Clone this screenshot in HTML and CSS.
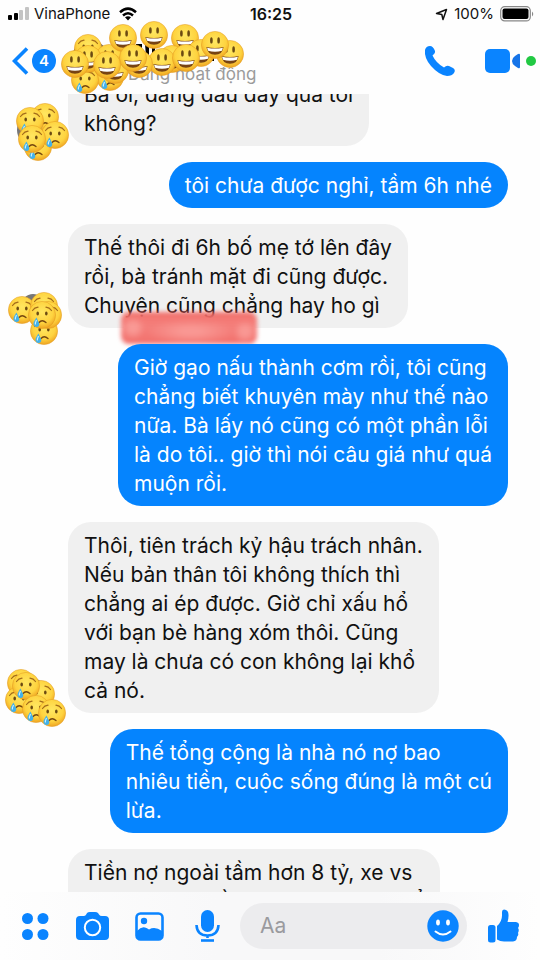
FILE: index.html
```html
<!DOCTYPE html>
<html lang="vi">
<head>
<meta charset="utf-8">
<meta name="viewport" content="width=device-width, initial-scale=1">
<title>Messenger</title>
<link rel="stylesheet" href="styles.css">
</head>
<body>
<svg class="defs" width="0" height="0" aria-hidden="true">
  <defs>
    <radialGradient id="skin" gradientUnits="userSpaceOnUse" cx="0" cy="-3" r="17">
      <stop offset="0" stop-color="#ffe761"/><stop offset=".65" stop-color="#fed33f"/><stop offset="1" stop-color="#eda01f"/>
    </radialGradient>
    <symbol id="happy" viewBox="-14 -14 28 28" overflow="visible">
      <circle r="13.6" fill="url(#skin)" stroke="#e39a20" stroke-width=".5"/>
      <ellipse cx="-3.6" cy="-4.6" rx="1.3" ry="3.2" fill="#6b4a12"/>
      <ellipse cx="3.6" cy="-4.6" rx="1.3" ry="3.2" fill="#6b4a12"/>
      <path d="M-8.600 2Q0 4 8.600 2Q7.500 9.800 0 9.800T-8.600 2Z" fill="#774313"/>
      <path d="M-7.900 2.700Q0 4.500 7.900 2.700L7 5.800Q0 7.500-7 5.800Z" fill="#fff"/>
    </symbol>
    <symbol id="sad" viewBox="-14 -14 28 28" overflow="visible">
      <circle r="13.6" fill="url(#skin)" stroke="#e39a20" stroke-width=".5"/>
      <path d="M-9.500-4.500Q-7.500-7.500-4-7.800M9.500-4.500Q7.500-7.500 4-7.800" fill="none" stroke="#a36b1b" stroke-width="1.200" stroke-linecap="round"/>
      <ellipse cx="-4.300" cy="-1.500" rx="1.300" ry="2" fill="#6b4a12"/>
      <ellipse cx="4.300" cy="-1.500" rx="1.300" ry="2" fill="#6b4a12"/>
      <path d="M-3 7.500Q0 4 4 7.500" fill="none" stroke="#74450f" stroke-width="1.300" stroke-linecap="round"/>
      <path d="M-5.500 2.500Q-9 7.500-8.500 9.500Q-7.500 12.500-5 12Q-2 11-3 8Z" fill="#42b1ea"/>
      <path d="M-5.500 5Q-7 8-6.500 9.500" fill="none" stroke="#c9efff" stroke-width="1.200"/>
    </symbol>
  </defs>
</svg>
<div class="app">
  <div class="status">
    <div class="status-left">
      <svg width="22" height="14" viewBox="0 0 22 14" aria-hidden="true"><rect y="8" width="4" height="5" rx="1"/><rect x="6" y="6" width="4" height="7" rx="1"/><rect x="11" y="3" width="4" height="10" rx="1" fill="#c4c4c4"/><rect x="17" width="4" height="13" rx="1" fill="#c4c4c4"/></svg>
      <span>VinaPhone</span>
      <svg class="wifi" width="20" height="14" viewBox="0 0 20 14" aria-hidden="true"><path d="M2 5.200Q10-2 18 5.200M5 8.500Q10 4 15 8.500" fill="none" stroke="#000" stroke-width="2.500"/><path d="M7 10.300Q10 8 13 10.300L10 13.500Z"/></svg>
    </div>
    <strong>16:25</strong>
    <div class="status-right">
      <svg width="13" height="13" viewBox="0 0 13 13" aria-hidden="true"><path d="M1.500 5.500L11.500 1.500L8 11.500L6.800 6.500Z" fill="none" stroke="#111" stroke-width="1.500" stroke-linejoin="round"/></svg>
      <span>100%</span>
      <svg width="34" height="16" viewBox="0 0 34 16" aria-hidden="true"><rect x=".7" y=".7" width="29.600" height="14.200" rx="4" fill="#fff" stroke="#888" stroke-width="1.200"/><rect x="2.500" y="2.500" width="26" height="10.600" rx="2"/><path d="M32 5.500Q34.500 8 32 10.500Z" fill="#888"/></svg>
    </div>
  </div>
  <header class="header">
    <button class="back" aria-label="Back">
      <svg width="17" height="28" viewBox="0 0 17 28" aria-hidden="true"><path d="M15 1.500L2.500 14L15 26.500" fill="none" stroke="#0a84ff" stroke-width="3.600"/></svg>
      <span class="count">4</span>
    </button>
    <div class="contact">
      <span class="presence">Đang hoạt động</span>
      <svg class="cover" width="196" height="76" viewBox="56 20 196 76" aria-hidden="true">
        <circle cx="90" cy="58" r="18" fill="#69645f"/>
        <path d="M136 44H142V53H139V47H136ZM145 44H155V56H152V47H149V56H146ZM205 58H214V61H205Z"/>
        <use href="#sad" x="74" y="34" width="28" height="28"/>
        <use href="#happy" x="95" y="44" width="28" height="28"/>
        <use href="#sad" x="96" y="63" width="28" height="28"/>
        <use href="#sad" x="71" y="66" width="28" height="28"/>
        <use href="#happy" x="74" y="45" width="28" height="28"/>
        <use href="#happy" x="101" y="56" width="28" height="28"/>
        <use href="#happy" x="109" y="24" width="28" height="28"/>
        <use href="#happy" x="140" y="21" width="28" height="28"/>
        <use href="#happy" x="171" y="24" width="28" height="28"/>
        <use href="#happy" x="187" y="39" width="28" height="28"/>
        <use href="#happy" x="216" y="40" width="28" height="28"/>
        <use href="#happy" x="201" y="31" width="28" height="28"/>
        <use href="#happy" x="158" y="45" width="28" height="28"/>
        <use href="#happy" x="148" y="48" width="28" height="28"/>
        <use href="#happy" x="172" y="44" width="28" height="28"/>
        <use href="#happy" x="125" y="50" width="28" height="28"/>
        <use href="#happy" x="119" y="44" width="28" height="28"/>
        <use href="#happy" x="61" y="50" width="28" height="28"/>
        <use href="#happy" x="93" y="51" width="28" height="28"/>
      </svg>
    </div>
    <button aria-label="Call">
      <svg width="32" height="32" viewBox="0 0 32 32" aria-hidden="true"><path d="M1 5Q2 1 6 1Q9 1 11 6Q11.500 8 8.500 10.500Q12 18 20 22.500Q22.500 20 25 21L29 23Q32 25 30 28Q28 31 23 31Q15 30 7 21Q0 13 1 5Z" fill="#0a84ff"/></svg>
    </button>
    <button class="video" aria-label="Video call">
      <svg width="51" height="26" viewBox="0 0 51 26" aria-hidden="true"><rect y="1" width="25" height="24" rx="5" fill="#0a84ff"/><path d="M27 13Q27 10 30 8L33 6Q35 5 35 7V19Q35 21 33 20L30 18Q27 16 27 13Z" fill="#1674e8"/><circle cx="46" cy="13" r="5" fill="#22c943"/></svg>
    </button>
  </header>
  <main class="thread">
    <div class="messages">
      <div class="row">
        <svg class="avatar" width="64" height="64" aria-hidden="true">
          <circle cx="29" cy="32" r="16" fill="#777"/>
          <use href="#sad" x="27" y="5" width="28" height="28"/><use href="#sad" x="12" y="9" width="28" height="28"/><use href="#sad" x="20" y="35" width="28" height="28"/><use href="#sad" x="37" y="23" width="28" height="28"/><use href="#sad" x="14" y="27" width="28" height="28"/>
        </svg>
        <p class="bubble">Bà ơi, đang đâu đấy qua tôi<br>không?</p>
      </div>
      <div class="row mine"><p class="bubble">tôi chưa được nghỉ, tầm 6h nhé</p></div>
      <div class="row">
        <svg class="avatar" width="64" height="64" aria-hidden="true">
          <circle cx="29" cy="26" r="12" fill="#777"/>
          <use href="#sad" x="4" y="16" width="28" height="28"/><use href="#sad" x="26" y="12" width="28" height="28"/><use href="#sad" x="26" y="37" width="28" height="28"/><use href="#sad" x="30" y="21" width="28" height="28"/><use href="#sad" x="24" y="21" width="28" height="28"/>
        </svg>
        <p class="bubble">Thế thôi đi 6h bố mẹ tớ lên đây<br>rồi, bà tránh mặt đi cũng được.<br>Chuyện cũng chẳng hay ho gì<span class="smear"></span></p>
      </div>
      <div class="row mine"><p class="bubble">Giờ gạo nấu thành cơm rồi, tôi cũng<br>chẳng biết khuyên mày như thế nào<br>nữa. Bà lấy nó cũng có một phần lỗi<br>là do tôi.. giờ thì nói câu giá như quá<br>muộn rồi.</p></div>
      <div class="row">
        <svg class="avatar" width="64" height="64" aria-hidden="true">
          <circle cx="28" cy="26" r="13" fill="#777"/>
          <use href="#sad" x="3" y="4" width="28" height="28"/><use href="#sad" x="23" y="15" width="28" height="28"/><use href="#sad" x="1" y="21" width="28" height="28"/><use href="#sad" x="8" y="7" width="28" height="28"/><use href="#sad" x="18" y="30" width="28" height="28"/><use href="#sad" x="34" y="34" width="28" height="28"/>
        </svg>
        <p class="bubble">Thôi, tiên trách kỷ hậu trách nhân.<br>Nếu bản thân tôi không thích thì<br>chẳng ai ép được. Giờ chỉ xấu hổ<br>với bạn bè hàng xóm thôi. Cũng<br>may là chưa có con không lại khổ<br>cả nó.</p>
      </div>
      <div class="row mine"><p class="bubble">Thế tổng cộng là nhà nó nợ bao<br>nhiêu tiền, cuộc sống đúng là một cú<br>lừa.</p></div>
      <div class="row">
        <span class="avatar spacer"></span>
        <p class="bubble">Tiền nợ ngoài tầm hơn 8 tỷ, xe vs<br>nhà cũng là tiền vay ngân hàng để</p>
      </div>
    </div>
  </main>
  <footer class="composer">
    <div class="tools">
      <button aria-label="More"><svg width="33" height="33" viewBox="0 0 33 33" aria-hidden="true"><g fill="#0a84ff"><circle cx="8.500" cy="8.500" r="5.500"/><circle cx="24" cy="8.500" r="5.500"/><circle cx="8.500" cy="24.500" r="5.500"/><circle cx="24" cy="24.500" r="5.500"/></g></svg></button>
      <button aria-label="Camera"><svg width="33" height="33" viewBox="0 0 33 33" aria-hidden="true"><path d="M4 6H8Q9.500 6 10.500 4L11 3Q12 2 14 2H19Q21 2 22 3L23 4.500Q24 6 26 6H29Q33 6 33 10V26Q33 30 29 30H4Q0 30 0 26V10Q0 6 4 6Z" fill="#0a84ff"/><circle cx="16.500" cy="17.500" r="7.700" fill="none" stroke="#fff" stroke-width="2"/></svg></button>
      <button aria-label="Photos"><svg width="33" height="33" viewBox="0 0 33 33" aria-hidden="true"><rect x="3.500" y="3.500" width="26" height="26" rx="4" fill="none" stroke="#0a84ff" stroke-width="2.600"/><circle cx="11" cy="11" r="3.200" fill="#0a84ff"/><path d="M4 21Q8 16.500 12 17.500Q14 18 16 19.500Q22 16 29 21V29H4Z" fill="#0a84ff"/></svg></button>
      <button aria-label="Voice"><svg width="33" height="33" viewBox="0 0 33 33" aria-hidden="true"><rect x="11" y="0" width="13" height="22" rx="6.500" fill="#0a84ff"/><path d="M6.500 15Q7 25.500 17.500 25.500T28.500 15M17.500 25.500V28" fill="none" stroke="#0a84ff" stroke-width="2.600"/><path d="M11 30.500H24" stroke="#0a84ff" stroke-width="2.600"/></svg></button>
    </div>
    <div class="field">
      <input type="text" placeholder="Aa" aria-label="Message">
      <button aria-label="Emoji"><svg width="32" height="32" viewBox="0 0 32 32" aria-hidden="true"><circle cx="16" cy="16" r="15.700" fill="#0a84ff"/><ellipse cx="11" cy="12.500" rx="1.900" ry="3" fill="#fff"/><ellipse cx="21" cy="12.500" rx="1.900" ry="3" fill="#fff"/><path d="M8.500 21.500Q16 27.500 23.500 21.500" fill="none" stroke="#fff" stroke-width="2" stroke-linecap="round"/></svg></button>
    </div>
    <button aria-label="Like"><svg width="33" height="34" viewBox="0 0 33 34" aria-hidden="true"><rect x="1" y="16" width="7.500" height="17.500" rx="2.500" fill="#0a84ff"/><path d="M10 17Q15.500 12 15 5V3Q15 .5 17 .5Q22 1 21.500 7Q21.500 10 20.500 13H29Q32 13.500 32 16Q32 18 31 19Q32.500 21 31 24Q32 26 30 28Q30 32 26 32.500H17Q13 32.500 10 30.500Z" fill="#0a84ff"/></svg></button>
  </footer>
</div>
</body>
</html>
```
FILE: styles.css
```css
* {
  box-sizing: border-box;
}

body {
  margin: 0;
  background: #fefefe;
  color: #111;
  font-family: Inter, "Noto Sans", sans-serif;
}

button {
  display: flex;
  align-items: center;
  padding: 0;
  border: 0;
  background: none;
}

svg {
  display: block;
  flex: none;
}

.defs {
  position: absolute;
}

.app {
  display: flex;
  flex-direction: column;
  height: 100vh;
}

.status {
  display: grid;
  grid-template-columns: 1fr auto 1fr;
  align-items: center;
  height: 28px;
  padding: 0 6px 0 8px;
  font-size: 15px;
  line-height: 20px;
}

.status-left,
.status-right {
  display: flex;
  align-items: center;
  gap: 4px;
}

.wifi {
  margin-left: 4px;
}

.status-right {
  justify-content: flex-end;
  gap: 6px;
}

.status strong {
  font-size: 16px;
  font-weight: 600;
}

.header {
  display: flex;
  align-items: center;
  height: 66px;
  padding: 0 4px 0 12px;
}

.back {
  gap: 3px;
}

.count {
  width: 24px;
  height: 24px;
  border-radius: 50%;
  background: #0a84ff;
  color: #fff;
  font: 600 15px/24px Inter, sans-serif;
  text-align: center;
}

.contact {
  position: relative;
  flex: 1;
  align-self: stretch;
  display: flex;
  align-items: flex-end;
  padding: 0 0 9px 72px;
}

.presence {
  color: #9b9b9b;
  font-size: 17px;
  line-height: 22px;
}

.cover {
  position: absolute;
  top: -8px;
  left: 0;
}

.video {
  margin-left: 29px;
}

.thread {
  flex: 1;
  min-height: 0;
  overflow: hidden;
}

.messages {
  display: flex;
  flex-direction: column;
  gap: 16px;
  margin-top: -23px;
}

.row {
  display: flex;
  align-items: flex-end;
  padding: 0 32px 0 4px;
}

.mine {
  justify-content: flex-end;
}

.avatar {
  width: 64px;
  margin-bottom: -16px;
  overflow: visible;
}

.spacer {
  flex: none;
}

.bubble {
  position: relative;
  margin: 0;
  padding: 9px 16px 8px;
  border-radius: 23px;
  background: #f0f0f0;
  font-size: 21px;
  line-height: 29px;
  white-space: nowrap;
}

.mine .bubble {
  background: #0584fe;
  color: #fff;
}

.smear {
  position: absolute;
  top: 88px;
  left: 53px;
  width: 136px;
  height: 32px;
  border-radius: 8px;
  background:
    radial-gradient(circle at 12px 16px, #ffb5b080 4px, transparent 12px),
    radial-gradient(ellipse at 70px 20px, #ffb5b080 10px, transparent 45px),
    radial-gradient(circle at 124px 20px, #ffb5b080 4px, transparent 12px),
    linear-gradient(#f2635ee6, #f47f7b 45%, #f2706c);
  filter: blur(2px);
}

.composer {
  display: flex;
  align-items: center;
  height: 68px;
  padding: 0 20px 0 19px;
  background: linear-gradient(90deg, #fefefe, #f8f8f9 40%, #f8f8f9 70%, #fefefe);
}

.tools {
  display: flex;
  gap: 24px;
}

.field {
  flex: 1;
  display: flex;
  align-items: center;
  min-width: 0;
  height: 46px;
  margin: 0 20px 0 17px;
  padding: 0 8px 0 20px;
  border-radius: 23px;
  background: #ececee;
}

.field input {
  flex: 1;
  min-width: 0;
  padding: 0;
  border: 0;
  outline: 0;
  background: none;
  font: 21px/28px Inter, sans-serif;
}

.field input::placeholder {
  color: #9a9a9e;
  opacity: 1;
}
```
